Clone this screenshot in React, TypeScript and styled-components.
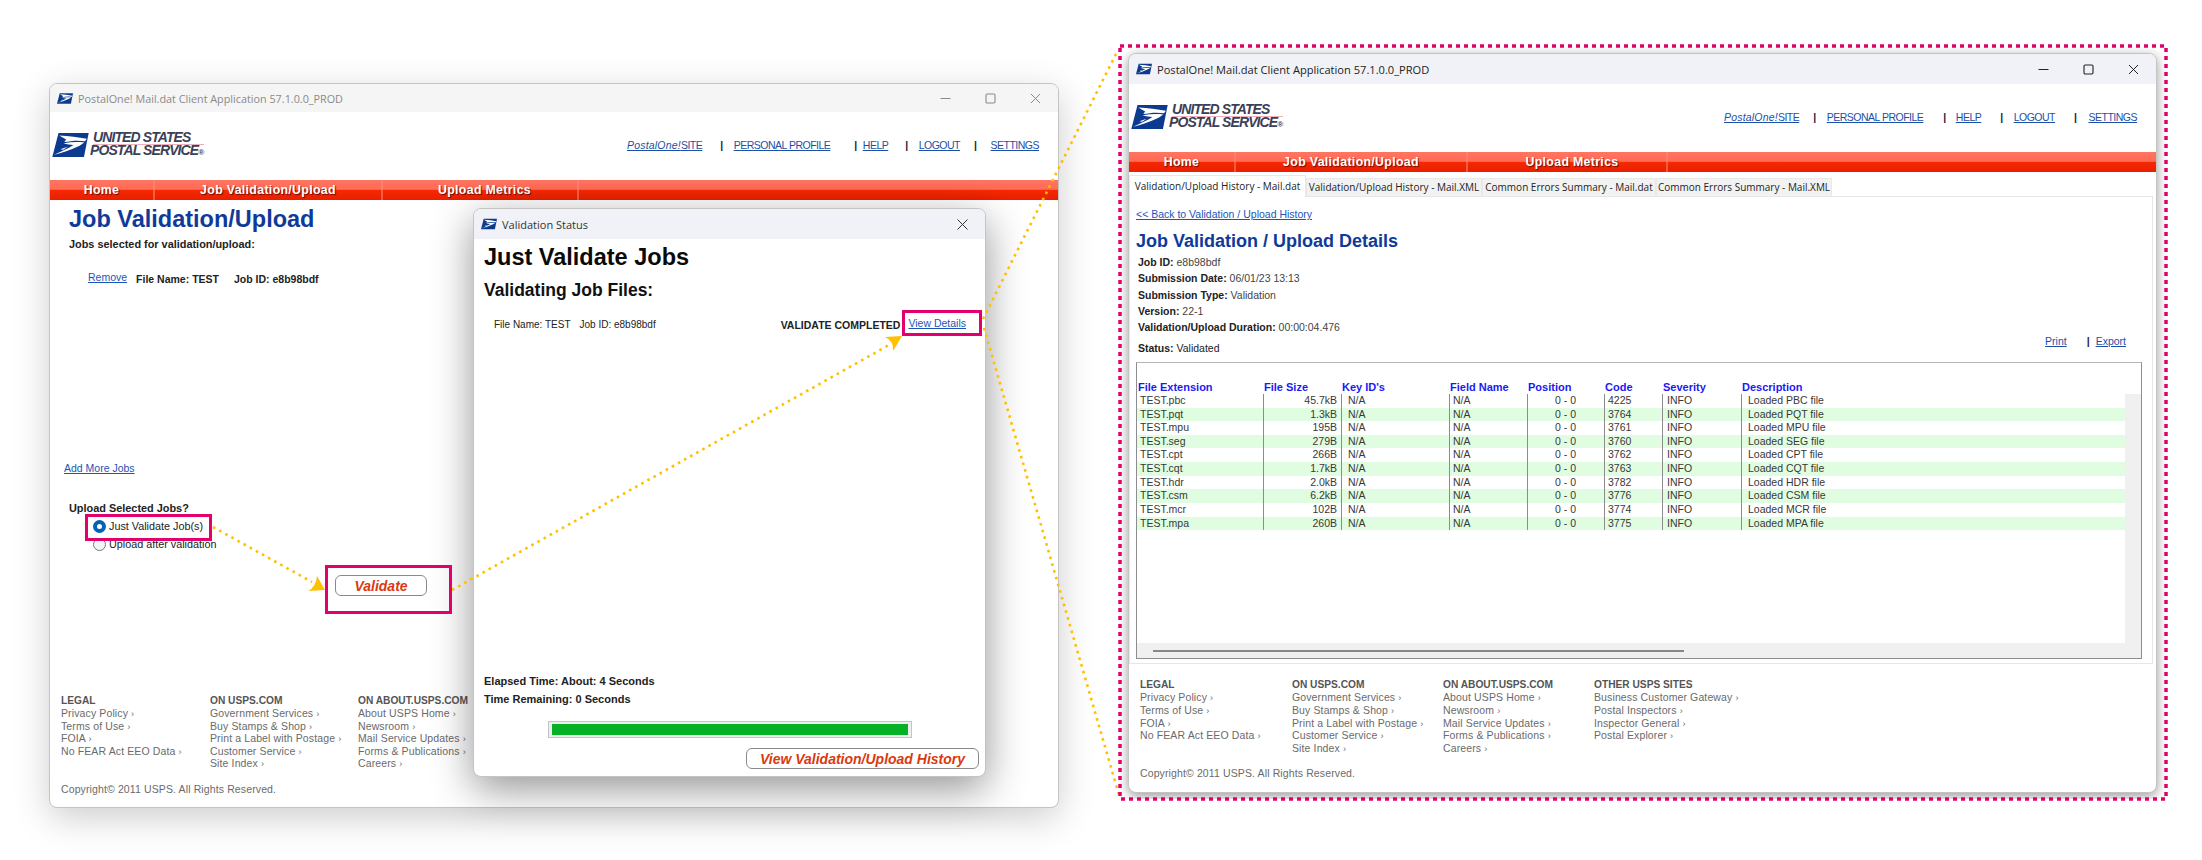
import React from "react";
import styled, { createGlobalStyle } from "styled-components";

const Global = createGlobalStyle`
  html, body { margin: 0; padding: 0; background: #fff; }
  * { box-sizing: border-box; }
  body { font-family: "Liberation Sans", Arial, sans-serif; font-size: 11px; color: #222; }
`;

const Desktop = styled.div`
  position: relative;
  width: 2202px;
  height: 860px;
  overflow: hidden;
  background: #fff;
`;

const Win = styled.div<{ $l: number; $t: number; $w: number; $h: number; $shadow: string }>`
  position: absolute;
  left: ${(p) => p.$l}px;
  top: ${(p) => p.$t}px;
  width: ${(p) => p.$w}px;
  height: ${(p) => p.$h}px;
  display: flex;
  flex-direction: column;
  background: #fff;
  border: 1px solid #c4c4c4;
  border-radius: 8px;
  box-shadow: ${(p) => p.$shadow};
`;

const ShotFrame = styled.div`
  position: absolute;
  left: 1119px;
  top: 46px;
  width: 1048px;
  height: 753px;
  overflow: hidden;
`;

const TitleBar = styled.div<{ $h: number; $bg: string; $fg: string; $size?: number }>`
  height: ${(p) => p.$h}px;
  flex: none;
  display: flex;
  align-items: center;
  padding-left: 7px;
  background: ${(p) => p.$bg};
  color: ${(p) => p.$fg};
  border-radius: 7px 7px 0 0;
  font-family: "Open Sans", sans-serif;
  font-size: ${(p) => p.$size ?? 11}px;
`;

const TitleText = styled.span`
  margin-left: 5px;
  flex: 1;
  white-space: nowrap;
`;

const CtrlBtn = styled.span`
  width: 45px;
  height: 100%;
  display: flex;
  align-items: center;
  justify-content: center;
`;

const Mark = ({ w, h }: { w: number; h: number }) => (
  <svg width={w} height={h} viewBox="0 0 100 66" style={{ flex: "none" }}>
    <path d="M17 0H100L87 66H0Z" fill="#0c3a8e" />
    <path d="M19 7C45 9 72 12 95 16L90 23C70 19 50 22 33 25L38 18C32 14 25 11 19 7Z" fill="#fff" />
    <path d="M31 28C50 25 70 24 88 26L75 35C50 47 25 55 5 60C25 50 45 42 58 33C50 32 40 31 31 28Z" fill="#fff" />
    <path d="M22 45L42 38L30 46Z" fill="#fff" />
  </svg>
);

const Controls = ({ c }: { c: string }) => (
  <>
    <CtrlBtn>
      <svg width="11" height="11" viewBox="0 0 11 11"><path d="M0.5 5.5H10.5" stroke={c} strokeWidth="1" /></svg>
    </CtrlBtn>
    <CtrlBtn>
      <svg width="11" height="11" viewBox="0 0 11 11"><rect x="1" y="1" width="9" height="9" rx="1.2" fill="none" stroke={c} strokeWidth="1.1" /></svg>
    </CtrlBtn>
    <CtrlBtn>
      <svg width="11" height="11" viewBox="0 0 11 11"><path d="M1 1L10 10M10 1L1 10" stroke={c} strokeWidth="1" /></svg>
    </CtrlBtn>
  </>
);

const Head = styled.div`
  height: 68px;
  flex: none;
  display: flex;
  align-items: center;
  justify-content: space-between;
  padding: 0 19px 3px 2px;
`;

const Logo = styled.div`
  display: flex;
  align-items: center;
  gap: 1px;
`;

const LogoText = styled.div`
  display: flex;
  flex-direction: column;
  font-weight: 700;
  font-style: italic;
  font-size: 14px;
  line-height: 13px;
  letter-spacing: -0.9px;
  color: #3b4058;
`;

const LogoTop = styled.span`
  margin-left: 3px;
  border-bottom: 1px solid #eab3ba;
  margin-bottom: -1px;
`;

const LogoBottom = styled.span`
  white-space: nowrap;
`;

const Reg = styled.span`
  font-size: 8px;
  letter-spacing: 0;
`;

const LinkRow = styled.div`
  display: flex;
  align-items: center;
  font-size: 10.5px;
  letter-spacing: -0.5px;
  line-height: 14px;
`;

const HLink = styled.a`
  color: #1c4fa8;
  text-decoration: underline;
  white-space: nowrap;
`;

const Ital = styled.i`
  letter-spacing: 0.2px;
`;

const Sep = styled.span<{ $l: number; $r: number }>`
  margin: 0 ${(p) => p.$r}px 0 ${(p) => p.$l}px;
  color: #223;
  font-weight: 700;
`;

const NavBar = styled.div<{ $cols: string }>`
  height: 20px;
  flex: none;
  display: grid;
  grid-template-columns: ${(p) => p.$cols};
  background: linear-gradient(#ff7562 0, #ff6a55 47%, #f62a00 50%, #e81f00 100%);
`;

const NavItem = styled.div<{ $pl?: number }>`
  display: flex;
  align-items: center;
  justify-content: center;
  padding-left: ${(p) => p.$pl ?? 0}px;
  color: #fff;
  font-weight: 700;
  font-size: 12.3px;
  letter-spacing: 0.35px;
  text-shadow: 1px 1px 1px rgba(70, 0, 0, 0.75);
  border-right: 2px solid rgba(255, 140, 120, 0.55);
  white-space: nowrap;
`;

const NavFill = styled.div``;

const Header = ({ gaps }: { gaps: number[][] }) => (
  <Head>
    <Logo>
      <Mark w={37} h={24} />
      <LogoText>
        <LogoTop>UNITED STATES</LogoTop>
        <LogoBottom>POSTAL SERVICE<Reg>®</Reg></LogoBottom>
      </LogoText>
    </Logo>
    <LinkRow>
      <HLink><Ital>PostalOne!</Ital>SITE</HLink>
      <Sep $l={gaps[0][0]} $r={gaps[0][1]}>|</Sep>
      <HLink>PERSONAL PROFILE</HLink>
      <Sep $l={gaps[1][0]} $r={gaps[1][1]}>|</Sep>
      <HLink>HELP</HLink>
      <Sep $l={gaps[2][0]} $r={gaps[2][1]}>|</Sep>
      <HLink>LOGOUT</HLink>
      <Sep $l={gaps[3][0]} $r={gaps[3][1]}>|</Sep>
      <HLink>SETTINGS</HLink>
    </LinkRow>
  </Head>
);

/* Left window content */
const Content = styled.div`
  display: flex;
  flex-direction: column;
  align-items: flex-start;
  padding-left: 19px;
`;

const PageTitle = styled.h1`
  margin: 5px 0 0;
  font-size: 23.5px;
  line-height: 28px;
  color: #0f3a9a;
  font-weight: 700;
  white-space: nowrap;
`;

const Strong = styled.div<{ $mt: number }>`
  margin-top: ${(p) => p.$mt}px;
  font-weight: 700;
  font-size: 10.9px;
  line-height: 14px;
  color: #222;
  white-space: nowrap;
`;

const JobRow = styled.div`
  margin: 19px 0 0 19px;
  display: flex;
  align-items: flex-start;
`;

const BlueLink = styled.a`
  color: #1c55b8;
  text-decoration: underline;
  font-size: 10.5px;
  line-height: 14px;
  white-space: nowrap;
`;

const FileInfo = styled.span<{ $ml: number }>`
  margin: 2px 0 0 ${(p) => p.$ml}px;
  font-weight: 700;
  font-size: 10.5px;
  line-height: 14px;
  white-space: nowrap;
`;

const AddMore = styled(BlueLink)`
  margin: 175px 0 0 -5px;
`;

const RadioRow = styled.div`
  margin: 4px 0 0 24px;
  display: flex;
  align-items: center;
  height: 14px;
  font-size: 10.8px;
  white-space: nowrap;
`;

const Radio = styled.span<{ $on?: boolean }>`
  width: 13px;
  height: 13px;
  margin-right: 3px;
  flex: none;
  border-radius: 50%;
  background: ${(p) => (p.$on ? "#fff" : "#f4f4f4")};
  border: ${(p) => (p.$on ? "4px solid #0062b8" : "1px solid #777")};
`;

const PillButton = styled.button`
  margin: 24px 0 0 266px;
  width: 92px;
  height: 21px;
  padding: 0;
  background: #fff;
  border: 1px solid #8a8a8a;
  border-radius: 6px;
  font-family: "Liberation Sans", sans-serif;
  font-weight: 700;
  font-style: italic;
  font-size: 14px;
  color: #d93a10;
`;

/* Footer */
const Foot = styled.div<{ $pl: number; $cols: string; $line: number; $gap: number; $pb: number }>`
  margin-top: auto;
  padding: 0 0 ${(p) => p.$pb}px ${(p) => p.$pl}px;
  display: grid;
  grid-template-columns: ${(p) => p.$cols};
  line-height: ${(p) => p.$line}px;
  row-gap: ${(p) => p.$gap}px;
  color: #6a6a6a;
  font-size: 10.5px;
  letter-spacing: 0.12px;
`;

const FootCol = styled.div`
  display: flex;
  flex-direction: column;
  height: ${6 * 12.6}px;
  white-space: nowrap;
`;

const FootHead = styled.div`
  font-weight: 700;
  font-size: 10.2px;
  letter-spacing: 0;
  color: #555;
`;

const Copy = styled.div`
  grid-column: 1 / -1;
`;

const Chev = styled.span`
  font-size: 9px;
  line-height: 0;
`;

const FOOT: [string, string[]][] = [
  ["LEGAL", ["Privacy Policy", "Terms of Use", "FOIA", "No FEAR Act EEO Data"]],
  ["ON USPS.COM", ["Government Services", "Buy Stamps & Shop", "Print a Label with Postage", "Customer Service", "Site Index"]],
  ["ON ABOUT.USPS.COM", ["About USPS Home", "Newsroom", "Mail Service Updates", "Forms & Publications", "Careers"]],
  ["OTHER USPS SITES", ["Business Customer Gateway", "Postal Inspectors", "Inspector General", "Postal Explorer"]],
];

const Footer = ({ n, pl, cols, line, gap, pb }: { n: number; pl: number; cols: string; line: number; gap: number; pb: number }) => (
  <Foot $pl={pl} $cols={cols} $line={line} $gap={gap} $pb={pb}>
    {FOOT.slice(0, n).map(([h, items]) => (
      <FootCol key={h}>
        <FootHead>{h}</FootHead>
        {items.map((t) => (
          <div key={t}>{t} <Chev>›</Chev></div>
        ))}
      </FootCol>
    ))}
    <Copy>Copyright© 2011 USPS. All Rights Reserved.</Copy>
  </Foot>
);

/* Modal */
const ModalBody = styled.div`
  flex: 1;
  display: flex;
  flex-direction: column;
  padding: 0 7px 7px 10px;
`;

const ModalH1 = styled.div`
  margin-top: 4px;
  font-weight: 700;
  font-size: 23.5px;
  line-height: 28px;
  color: #0a0a0a;
`;

const ModalH2 = styled.div`
  margin-top: 8px;
  font-weight: 700;
  font-size: 17.5px;
  line-height: 22px;
  color: #111;
`;

const StatusRow = styled.div`
  margin: 17px 0 0 10px;
  display: flex;
  line-height: 14px;
  font-size: 10px;
  white-space: nowrap;
`;

const StatusInfo = styled.span<{ $ml?: number }>`
  margin-left: ${(p) => p.$ml ?? 0}px;
`;

const StatusDone = styled.b`
  margin-left: auto;
  font-size: 10.5px;
`;

const DetailsLink = styled(BlueLink)`
  margin: -2px 12px 0 8px;
`;

const TimeLine = styled.div<{ $mt: string }>`
  margin-top: ${(p) => p.$mt};
  font-weight: 700;
  font-size: 11px;
  line-height: 14px;
  color: #222;
`;

const Progress = styled.div`
  margin: 15px 0 0 64px;
  width: 364px;
  height: 17px;
  padding: 2px 3px;
  border: 1px solid #c4c4c4;
  background: #eee;
  flex: none;
`;

const ProgressFill = styled.div`
  height: 100%;
  background: #06b126;
`;

const HistoryBtn = styled(PillButton)`
  margin: 10px 0 0 262px;
  width: 233px;
  font-size: 14px;
  flex: none;
`;

/* Right window */
const Tabs = styled.div`
  height: 21px;
  margin-top: 3px;
  flex: none;
  display: flex;
  align-items: flex-end;
  font-family: "Open Sans", sans-serif;
  font-size: 10px;
  color: #222;
  position: relative;
  z-index: 1;
`;

const Tab = styled.div<{ $w: number; $active?: boolean }>`
  width: ${(p) => p.$w}px;
  height: ${(p) => (p.$active ? 22 : 18)}px;
  margin-bottom: ${(p) => (p.$active ? -1 : 0)}px;
  padding-bottom: 2px;
  display: flex;
  align-items: center;
  justify-content: center;
  background: ${(p) => (p.$active ? "#fff" : "#f2f2f2")};
  border: 1px solid #e8e8e8;
  border-bottom: none;
  white-space: nowrap;
`;

const Panel = styled.div`
  margin-right: 3px;
  height: 468px;
  flex: none;
  border: 1px solid #e6e6e6;
  padding-left: 6px;
  display: flex;
  flex-direction: column;
`;

const BackLink = styled(BlueLink)`
  margin-top: 10px;
  align-self: flex-start;
`;

const DetailTitle = styled.h2`
  margin: 9px 0 0;
  font-size: 18px;
  line-height: 22px;
  color: #0f3a9a;
  font-weight: 700;
`;

const Meta = styled.div`
  margin: 2px 0 0 2px;
  line-height: 16.3px;
  font-size: 10.5px;
  color: #444;
  white-space: nowrap;
`;

const MetaKey = styled.b`
  color: #222;
`;

const StatusLine = styled.div`
  margin: 2.5px 0 0 2px;
  height: 20px;
  padding-right: 26px;
  display: flex;
  justify-content: space-between;
  align-items: center;
  font-size: 10.5px;
`;

const Actions = styled.div`
  margin-top: -13px;
  display: flex;
  align-items: center;
  font-size: 10.5px;
`;

const TableBox = styled.div`
  margin-top: 4px;
  width: 1006px;
  height: 297px;
  display: flex;
  flex-direction: column;
  border: 1px solid #8d8d8d;
  border-top-color: #b4b4b4;
`;

const COLS = "126px 78px 108px 78px 77px 58px 79px 384px";

const THead = styled.div`
  height: 31px;
  flex: none;
  display: grid;
  grid-template-columns: ${COLS};
  align-items: end;
`;

const Th = styled.div`
  padding-left: 1px;
  line-height: 14px;
  font-weight: 700;
  font-size: 11px;
  color: #1a1af5;
  white-space: nowrap;
`;

const TBodyWrap = styled.div`
  flex: 1;
  display: flex;
  min-height: 0;
`;

const TBody = styled.div`
  width: 988px;
`;

const VTrack = styled.div`
  flex: 1;
  background: #f0f0f0;
`;

const Row = styled.div<{ $odd: boolean }>`
  height: 13.63px;
  display: grid;
  grid-template-columns: ${COLS};
  background: ${(p) => (p.$odd ? "#e1fde1" : "#fff")};
`;

const Td = styled.div<{ $first?: boolean; $right?: boolean; $pad: number }>`
  border-left: ${(p) => (p.$first ? "none" : "1px solid #8c8c8c")};
  text-align: ${(p) => (p.$right ? "right" : "left")};
  ${(p) => (p.$right ? `padding-right: ${p.$pad}px;` : `padding-left: ${p.$pad}px;`)}
  font-size: 10.5px;
  line-height: 13.63px;
  color: #383838;
  white-space: nowrap;
`;

const HTrack = styled.div`
  height: 15px;
  flex: none;
  background: #f0f0f0;
  padding: 7px 0 0 16px;
`;

const HThumb = styled.div`
  width: 531px;
  height: 2px;
  background: #888;
`;

const ROWS = [
  ["pbc", "45.7kB", "4225", "PBC"],
  ["pqt", "1.3kB", "3764", "PQT"],
  ["mpu", "195B", "3761", "MPU"],
  ["seg", "279B", "3760", "SEG"],
  ["cpt", "266B", "3762", "CPT"],
  ["cqt", "1.7kB", "3763", "CQT"],
  ["hdr", "2.0kB", "3782", "HDR"],
  ["csm", "6.2kB", "3776", "CSM"],
  ["mcr", "102B", "3774", "MCR"],
  ["mpa", "260B", "3775", "MPA"],
];

const HEADS = ["File Extension", "File Size", "Key ID's", "Field Name", "Position", "Code", "Severity", "Description"];

const Overlay = styled.svg`
  position: absolute;
  left: 0;
  top: 0;
  pointer-events: none;
`;

const Y = "#ffc000";
const P = "#e2006c";

const Dots = ({ d }: { d: string }) => (
  <path d={d} fill="none" stroke={Y} strokeWidth="2.6" strokeDasharray="2.6 4.4" />
);

export default function App() {
  return (
    <Desktop>
      <Global />

      <Win $l={49} $t={83} $w={1010} $h={725} $shadow="0 10px 36px rgba(0,0,0,.2)">
        <TitleBar $h={28} $bg="#f5f5f5" $fg="#8a8a8a" $size={10.8}>
          <Mark w={16} h={11} />
          <TitleText>PostalOne! Mail.dat Client Application 57.1.0.0_PROD</TitleText>
          <Controls c="#8a8a8a" />
        </TitleBar>
        <Header gaps={[[18, 11], [24, 6], [17, 11], [14, 14]]} />
        <NavBar $cols="105px 228px 196px 1fr">
          <NavItem>Home</NavItem>
          <NavItem>Job Validation/Upload</NavItem>
          <NavItem $pl={9}>Upload Metrics</NavItem>
          <NavFill />
        </NavBar>
        <Content>
          <PageTitle>Job Validation/Upload</PageTitle>
          <Strong $mt={4}>Jobs selected for validation/upload:</Strong>
          <JobRow>
            <BlueLink>Remove</BlueLink>
            <FileInfo $ml={9}>File Name: TEST</FileInfo>
            <FileInfo $ml={15}>Job ID: e8b98bdf</FileInfo>
          </JobRow>
          <AddMore>Add More Jobs</AddMore>
          <Strong $mt={26}>Upload Selected Jobs?</Strong>
          <RadioRow><Radio $on />Just Validate Job(s)</RadioRow>
          <RadioRow><Radio />Upload after validation</RadioRow>
          <PillButton>Validate</PillButton>
        </Content>
        <Footer n={3} pl={11} cols="149px 148px 148px" line={12.4} gap={12} pb={12} />
      </Win>

      <Win $l={473} $t={208} $w={513} $h={569} $shadow="0 12px 40px rgba(0,0,0,.42)">
        <TitleBar $h={30} $bg="#f0f2f8" $fg="#333">
          <Mark w={16} h={12} />
          <TitleText>Validation Status</TitleText>
          <CtrlBtn>
            <svg width="11" height="11" viewBox="0 0 11 11"><path d="M0.5 0.5L10.5 10.5M10.5 0.5L0.5 10.5" stroke="#333" strokeWidth="1" /></svg>
          </CtrlBtn>
        </TitleBar>
        <ModalBody>
          <ModalH1>Just Validate Jobs</ModalH1>
          <ModalH2>Validating Job Files:</ModalH2>
          <StatusRow>
            <StatusInfo>File Name: TEST</StatusInfo>
            <StatusInfo $ml={9}>Job ID: e8b98bdf</StatusInfo>
            <StatusDone>VALIDATE COMPLETED</StatusDone>
            <DetailsLink>View Details</DetailsLink>
          </StatusRow>
          <TimeLine $mt="auto">Elapsed Time: About: 4 Seconds</TimeLine>
          <TimeLine $mt="4px">Time Remaining: 0 Seconds</TimeLine>
          <Progress><ProgressFill /></Progress>
          <HistoryBtn>View Validation/Upload History</HistoryBtn>
        </ModalBody>
      </Win>

      <ShotFrame>
        <Win $l={9} $t={7} $w={1029} $h={740} $shadow="0 3px 12px rgba(0,0,0,.4)">
          <TitleBar $h={30} $bg="#f1f2f7" $fg="#222" $size={11.1}>
            <Mark w={16} h={12} />
            <TitleText>PostalOne! Mail.dat Client Application 57.1.0.0_PROD</TitleText>
            <Controls c="#222" />
          </TitleBar>
          <Header gaps={[[14, 11], [20, 10], [19, 11], [19, 12]]} />
          <NavBar $cols="107px 232px 200px 1fr">
            <NavItem>Home</NavItem>
            <NavItem>Job Validation/Upload</NavItem>
            <NavItem $pl={10}>Upload Metrics</NavItem>
            <NavFill />
          </NavBar>
          <Tabs>
            <Tab $w={177} $active>Validation/Upload History - Mail.dat</Tab>
            <Tab $w={176}>Validation/Upload History - Mail.XML</Tab>
            <Tab $w={174}>Common Errors Summary - Mail.dat</Tab>
            <Tab $w={176}>Common Errors Summary - Mail.XML</Tab>
          </Tabs>
          <Panel>
            <BackLink>&lt;&lt; Back to Validation / Upload History</BackLink>
            <DetailTitle>Job Validation / Upload Details</DetailTitle>
            <Meta>
              <div><MetaKey>Job ID:</MetaKey> e8b98bdf</div>
              <div><MetaKey>Submission Date:</MetaKey> 06/01/23 13:13</div>
              <div><MetaKey>Submission Type:</MetaKey> Validation</div>
              <div><MetaKey>Version:</MetaKey> 22-1</div>
              <div><MetaKey>Validation/Upload Duration:</MetaKey> 00:00:04.476</div>
            </Meta>
            <StatusLine>
              <span><MetaKey>Status:</MetaKey> Validated</span>
              <Actions>
                <HLink>Print</HLink>
                <Sep $l={20} $r={6}>|</Sep>
                <HLink>Export</HLink>
              </Actions>
            </StatusLine>
            <TableBox>
              <THead>{HEADS.map((h) => <Th key={h}>{h}</Th>)}</THead>
              <TBodyWrap>
                <TBody>
                  {ROWS.map(([ext, size, code, up], i) => (
                    <Row key={ext} $odd={i % 2 === 1}>
                      <Td $first $pad={3}>TEST.{ext}</Td>
                      <Td $right $pad={4}>{size}</Td>
                      <Td $pad={6}>N/A</Td>
                      <Td $pad={3}>N/A</Td>
                      <Td $right $pad={28}>0 - 0</Td>
                      <Td $pad={3}>{code}</Td>
                      <Td $pad={4}>INFO</Td>
                      <Td $pad={6}>Loaded {up} file</Td>
                    </Row>
                  ))}
                </TBody>
                <VTrack />
              </TBodyWrap>
              <HTrack><HThumb /></HTrack>
            </TableBox>
          </Panel>
          <Footer n={4} pl={11} cols="152px 151px 151px 200px" line={12.6} gap={13} pb={12} />
        </Win>
      </ShotFrame>

      <Overlay width="2202" height="860" viewBox="0 0 2202 860">
        <Dots d="M213 527L312 582" />
        <Dots d="M452 590L889 345" />
        <Dots d="M983 319L1118 50" />
        <Dots d="M984 328L1119 795" />
        <path d="M308 591L325 590L317 576Q316 587 308 591Z" fill={Y} />
        <path d="M885 337L902 336L893 351Q894 341 885 337Z" fill={Y} />
        <rect x="86.5" y="515.5" width="124" height="24" fill="none" stroke={P} strokeWidth="3" />
        <rect x="326.5" y="566.5" width="124" height="46" fill="none" stroke={P} strokeWidth="3" />
        <rect x="903.5" y="311.5" width="77" height="23" fill="none" stroke={P} strokeWidth="3" />
        <rect x="1120" y="46" width="1046" height="753" fill="none" stroke={P} strokeWidth="3.5" strokeDasharray="4 4" />
      </Overlay>
    </Desktop>
  );
}
